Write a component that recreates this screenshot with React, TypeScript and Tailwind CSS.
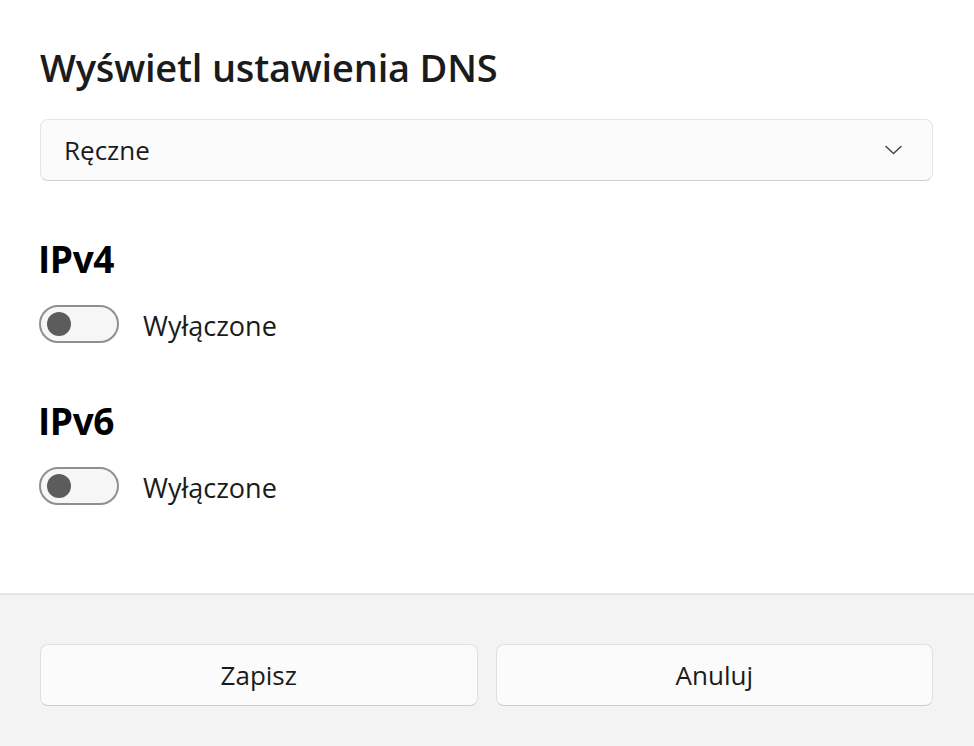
const Toggle = () => {
  return (
    <span className="inline-flex items-center w-[80px] h-[38px] rounded-full border-2 border-[#8f8f8f] bg-[#f6f6f6]">
      <span className="ml-[6px] h-[24px] w-[24px] rounded-full bg-[#5c5c5c]" />
    </span>
  );
};

const Section = ({ title }: { title: string }) => {
  return (
    <div className="flex flex-col">
      <h2 className="-ml-[2px] text-[37px] leading-[44px] font-bold text-black tracking-[-0.4px]">
        {title}
      </h2>
      <div className="flex items-center gap-[24px] mt-[24px] -ml-[1px]">
        <Toggle />
        <span className="pt-[4px] text-[27px] leading-[34px] text-[#1b1b1b]">
          Wyłączone
        </span>
      </div>
    </div>
  );
};

export default function App() {
  return (
    <div
      className="h-screen w-full flex flex-col bg-white"
      style={{ fontFamily: '"Open Sans", "Noto Sans", sans-serif' }}
    >
      <main className="flex-1 flex flex-col pl-[40px] pr-[41px] pt-[44px]">
        <h1 className="text-[38px] leading-[46px] font-semibold text-[#1b1b1b] tracking-[-0.2px]">
          Wyświetl ustawienia DNS
        </h1>
        <div className="mt-[29px] h-[62px] flex items-center justify-between rounded-[8px] border border-[#e5e5e5] border-b-[#cfcfcf] bg-[#fbfbfb] pl-[23px] pr-[30px]">
          <span className="text-[26px] text-[#1b1b1b]">Ręczne</span>
          <svg width="17" height="10" viewBox="0 0 17 10" fill="none">
            <path
              d="M1 1.5 L8.5 8.5 L16 1.5"
              stroke="#4a4a4a"
              strokeWidth="1.6"
              strokeLinecap="round"
              strokeLinejoin="round"
            />
          </svg>
        </div>
        <div className="mt-[56px] flex flex-col gap-[56px]">
          <Section title="IPv4" />
          <Section title="IPv6" />
        </div>
      </main>
      <footer className="h-[153px] border-t-2 border-[#e5e5e5] bg-[#f3f3f3] pl-[40px] pr-[41px] pt-[49px]">
        <div className="grid grid-cols-2 gap-[18px]">
          <button
            type="button"
            className="h-[62px] rounded-[8px] border border-[#e0e0e0] border-b-[#cccccc] bg-[#fbfbfb] text-[26px] text-[#1b1b1b]"
          >
            Zapisz
          </button>
          <button
            type="button"
            className="h-[62px] rounded-[8px] border border-[#e0e0e0] border-b-[#cccccc] bg-[#fbfbfb] text-[26px] text-[#1b1b1b]"
          >
            Anuluj
          </button>
        </div>
      </footer>
    </div>
  );
}
